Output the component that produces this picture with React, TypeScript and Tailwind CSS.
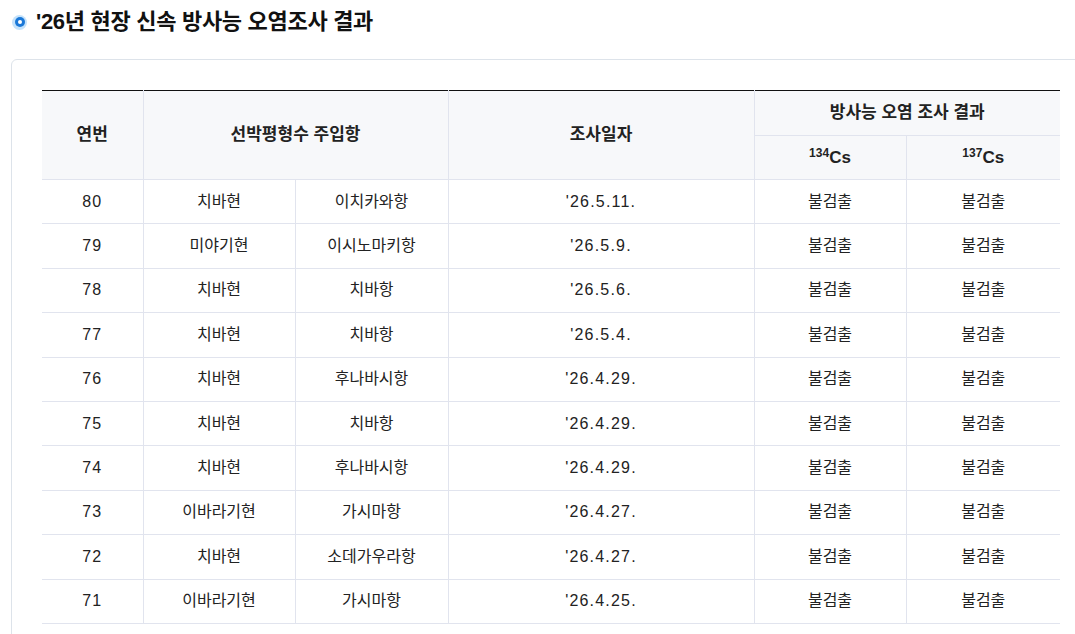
import React from "react";

const rows = [
  ["80", "치바현", "이치카와항", "'26.5.11."],
  ["79", "미야기현", "이시노마키항", "'26.5.9."],
  ["78", "치바현", "치바항", "'26.5.6."],
  ["77", "치바현", "치바항", "'26.5.4."],
  ["76", "치바현", "후나바시항", "'26.4.29."],
  ["75", "치바현", "치바항", "'26.4.29."],
  ["74", "치바현", "후나바시항", "'26.4.29."],
  ["73", "이바라기현", "가시마항", "'26.4.27."],
  ["72", "치바현", "소데가우라항", "'26.4.27."],
  ["71", "이바라기현", "가시마항", "'26.4.25."],
];

export default function App() {
  const cell = "border border-[#e1e4ee] text-center align-middle";
  return (
    <div
      className="w-[1075px] h-[634px] overflow-hidden bg-white text-[#222]"
      style={{ fontFamily: '"Liberation Sans", "Noto Sans CJK KR", sans-serif' }}
    >
      <div className="flex items-center pl-[12px] pt-[4px] h-[40px]">
        <span className="w-[15px] h-[15px] rounded-full bg-[#c4e2fb] flex items-center justify-center">
          <span className="w-[10px] h-[10px] rounded-full bg-[#1a78d8] flex items-center justify-center">
            <span className="w-[4px] h-[4px] rounded-full bg-white" />
          </span>
        </span>
        <h2 className="ml-[9px] text-[22px] font-bold tracking-[-0.3px] text-[#111] leading-none">
          '26년 현장 신속 방사능 오염조사 결과
        </h2>
      </div>
      <div className="mt-[19px] ml-[11px] w-[1090px] border border-[#dde3ea] rounded-[6px] pl-[30px] pt-[30px] pb-[30px]">
        <table className="w-[1018px] border-collapse table-fixed text-[16px]">
          <colgroup>
            <col className="w-[101px]" />
            <col className="w-[152px]" />
            <col className="w-[153px]" />
            <col className="w-[306px]" />
            <col className="w-[152px]" />
            <col className="w-[154px]" />
          </colgroup>
          <thead className="bg-[#f7f8fa] font-bold text-[17px]">
            <tr className="h-[45px] border-t border-t-[#111]">
              <th rowSpan={2} className={cell + " border-l-0 border-t-[#111]"}>연번</th>
              <th rowSpan={2} colSpan={2} className={cell + " border-t-[#111]"}>선박평형수 주입항</th>
              <th rowSpan={2} className={cell + " border-t-[#111]"}>조사일자</th>
              <th colSpan={2} className={cell + " border-r-0 border-t-[#111]"}>방사능 오염 조사 결과</th>
            </tr>
            <tr className="h-[44px]">
              <th className={cell}>
                <sup className="text-[12px] font-bold">134</sup>Cs
              </th>
              <th className={cell + " border-r-0"}>
                <sup className="text-[12px] font-bold">137</sup>Cs
              </th>
            </tr>
          </thead>
          <tbody>
            {rows.map((r) => (
              <tr key={r[0]} className="h-[44.4px]">
                <td className={cell + " border-l-0 tracking-[1px]"}>{r[0]}</td>
                <td className={cell}>{r[1]}</td>
                <td className={cell}>{r[2]}</td>
                <td className={cell + " tracking-[1.2px]"}>{r[3]}</td>
                <td className={cell}>불검출</td>
                <td className={cell + " border-r-0"}>불검출</td>
              </tr>
            ))}
          </tbody>
        </table>
      </div>
    </div>
  );
}
